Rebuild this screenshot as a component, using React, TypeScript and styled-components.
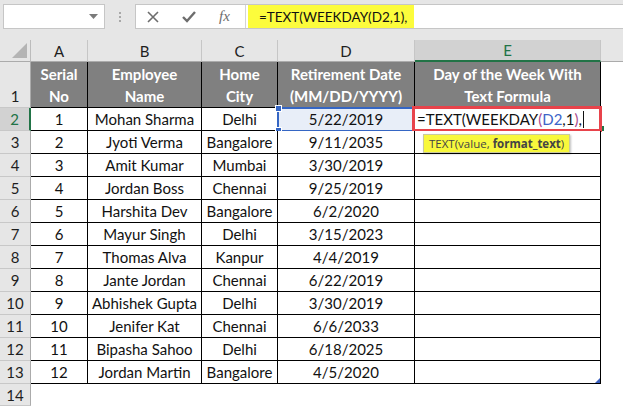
import React from "react";
import styled, { createGlobalStyle, css } from "styled-components";

const Global = createGlobalStyle`
  html, body { margin: 0; padding: 0; background: #ffffff; overflow: hidden; }
  body { font-family: Lato, "Open Sans", sans-serif; width: 623px; height: 406px; }
`;

const Page = styled.div`
  width: 623px;
  height: 406px;
  display: flex;
  flex-direction: column;
  overflow: hidden;
`;

const Toolbar = styled.div`
  height: 40px;
  flex: none;
  background: #e6e6e6;
  display: flex;
  align-items: flex-start;
  padding: 4px 0 0 3px;
  box-sizing: border-box;
`;

const NameBox = styled.div`
  width: 102px;
  height: 25px;
  box-sizing: border-box;
  background: #fff;
  border: 1px solid #c6c6c6;
  display: flex;
  justify-content: flex-end;
  align-items: center;
  padding-right: 6px;
`;

const Dots = styled.div`
  width: 30px;
  height: 25px;
  display: flex;
  flex-direction: column;
  align-items: center;
  justify-content: center;
  gap: 2px;
  span {
    width: 2px;
    height: 2px;
    background: #a8a8a8;
  }
`;

const FormulaBar = styled.div`
  flex: 1;
  height: 25px;
  box-sizing: border-box;
  background: #fff;
  border: 1px solid #c6c6c6;
  border-right: none;
  display: flex;
  align-items: stretch;
`;

const Buttons = styled.div`
  width: 110px;
  flex: none;
  display: flex;
  align-items: center;
  justify-content: flex-start;
  gap: 23px;
  padding: 0 0 0 11px;
  box-sizing: border-box;
  border-right: 1px solid #d4d4d4;
`;

const FxLabel = styled.span`
  font-family: "Liberation Serif", serif;
  font-style: italic;
  font-size: 15px;
  color: #6d6d6d;
`;

const FormulaInput = styled.div`
  display: flex;
  align-items: stretch;
  padding: 0 0 0 2px;
`;

const Highlight = styled.div`
  background: #fcfc3c;
  width: 166px;
  display: flex;
  align-items: center;
  padding-left: 11px;
  box-sizing: border-box;
  font-family: Lato, sans-serif;
  font-size: 13.5px;
  color: #111;
`;

const Sheet = styled.div`
  display: grid;
  grid-template-columns: 31px 57px 114px 76px 137px 186px 1fr;
  grid-template-rows: 22px 46px repeat(12, 23px) 22px;
  flex: 1;
`;

const headerBg = "#e6e6e6";

const Corner = styled.div`
  background: ${headerBg};
  border-right: 1px solid #bcbcbc;
  border-bottom: 1px solid #ababab;
  position: relative;
  &::after {
    content: "";
    position: absolute;
    right: 3px;
    bottom: 3px;
    width: 0;
    height: 0;
    border-left: 15px solid transparent;
    border-bottom: 15px solid #b4b4b4;
  }
`;

const ColHeader = styled.div<{ $active?: boolean; $last?: boolean }>`
  background: ${headerBg};
  border-right: ${(p) => (p.$last ? "none" : "1px solid #c6c6c6")};
  border-bottom: 1px solid #ababab;
  display: flex;
  align-items: center;
  justify-content: center;
  font-size: 15px;
  color: #1e1e1e;
  ${(p) =>
    p.$active &&
    css`
      background: #d2d2d2;
      color: #217346;
      border-bottom: 2px solid #217346;
    `}
`;

const RowHeader = styled.div<{ $active?: boolean; $tall?: boolean }>`
  background: ${headerBg};
  border-right: 1px solid #ababab;
  border-bottom: 1px solid #c8c8c8;
  display: flex;
  justify-content: center;
  align-items: ${(p) => (p.$tall ? "flex-end" : "center")};
  padding-bottom: ${(p) => (p.$tall ? "2px" : "0")};
  font-size: 15px;
  color: #1e1e1e;
  box-sizing: border-box;
  ${(p) =>
    p.$active &&
    css`
      background: #d2d2d2;
      color: #217346;
      border-right: 2px solid #217346;
    `}
`;

const HeadCell = styled.div`
  background: #808080;
  border-right: 1px solid #000;
  border-bottom: 1px solid #000;
  color: #fff;
  font-weight: 700;
  font-size: 15px;
  line-height: 22px;
  display: flex;
  align-items: flex-end;
  justify-content: center;
  text-align: center;
  white-space: nowrap;
`;

const Cell = styled.div<{ $selected?: boolean }>`
  border-right: 1px solid #000;
  border-bottom: 1px solid #000;
  display: flex;
  align-items: center;
  justify-content: center;
  font-size: 15px;
  color: #111;
  white-space: nowrap;
  position: relative;
  background: ${(p) => (p.$selected ? "#e8eef8" : "#fff")};
`;

const Blank = styled.div`
  background: #fff;
`;

const Selection = styled.div`
  position: absolute;
  left: -1px;
  top: -1px;
  right: -1px;
  bottom: -2px;
  border: 2px solid #3566c4;
  pointer-events: none;
`;

const Handle = styled.span<{ $pos: "top" | "bottom" }>`
  position: absolute;
  left: -4px;
  ${(p) => (p.$pos === "top" ? "top: -4px;" : "bottom: -4px;")}
  width: 5px;
  height: 5px;
  background: #3566c4;
  border: 1px solid #fff;
`;

const EditCell = styled.div`
  border-right: 1px solid #000;
  border-bottom: 1px solid #000;
  position: relative;
  display: flex;
  align-items: center;
  font-size: 15px;
  color: #111;
  white-space: nowrap;
  padding-left: 2px;
`;

const EditFrame = styled.div`
  position: absolute;
  left: -3px;
  top: -2px;
  right: -2px;
  bottom: -2px;
  border: 3px solid #e8434b;
  pointer-events: none;
`;

const Caret = styled.span`
  display: inline-block;
  width: 1px;
  height: 17px;
  background: #111;
  margin-left: 1px;
  vertical-align: middle;
`;

const Ref = styled.span`
  color: #3d64c8;
`;

const Paren = styled.span`
  color: #a8488c;
`;

const Tip = styled.div`
  position: absolute;
  left: 8px;
  top: 26px;
  height: 17px;
  padding: 0 5px;
  background: #f8f83c;
  border: 1px solid #c9c9a0;
  box-shadow: 1px 1px 2px rgba(0, 0, 0, 0.25);
  font-family: "Open Sans", sans-serif;
  font-size: 11.5px;
  color: #444;
  display: flex;
  align-items: center;
  z-index: 2;
  b {
    font-weight: 700;
    margin-left: 3px;
  }
`;

const FillMark = styled.span`
  position: absolute;
  right: -4px;
  bottom: -1px;
  width: 2px;
  height: 5px;
  background: #217346;
`;

const Corner2 = styled.span`
  position: absolute;
  right: 0;
  bottom: 0;
  width: 0;
  height: 0;
  border-left: 5px solid transparent;
  border-bottom: 5px solid #3a5fbf;
`;

const headers = [
  ["Serial", "No"],
  ["Employee", "Name"],
  ["Home", "City"],
  ["Retirement Date", "(MM/DD/YYYY)"],
  ["Day of the Week With", "Text Formula"],
];

const rows: [number, string, string, string][] = [
  [1, "Mohan Sharma", "Delhi", "5/22/2019"],
  [2, "Jyoti Verma", "Bangalore", "9/11/2035"],
  [3, "Amit Kumar", "Mumbai", "3/30/2019"],
  [4, "Jordan Boss", "Chennai", "9/25/2019"],
  [5, "Harshita Dev", "Bangalore", "6/2/2020"],
  [6, "Mayur Singh", "Delhi", "3/15/2023"],
  [7, "Thomas Alva", "Kanpur", "4/4/2019"],
  [8, "Jante Jordan", "Chennai", "6/22/2019"],
  [9, "Abhishek Gupta", "Delhi", "3/30/2019"],
  [10, "Jenifer Kat", "Chennai", "6/6/2033"],
  [11, "Bipasha Sahoo", "Delhi", "6/18/2025"],
  [12, "Jordan Martin", "Bangalore", "4/5/2020"],
];

export default function App() {
  return (
    <Page>
      <Global />
      <Toolbar>
        <NameBox>
          <svg width="9" height="5" viewBox="0 0 9 5">
            <path d="M0 0 H9 L4.5 5 Z" fill="#7a7a7a" />
          </svg>
        </NameBox>
        <Dots>
          <span />
          <span />
          <span />
        </Dots>
        <FormulaBar>
          <Buttons>
            <svg width="12" height="12" viewBox="0 0 12 12">
              <path d="M1 1 L11 11 M11 1 L1 11" stroke="#6d6d6d" strokeWidth="1.6" />
            </svg>
            <svg width="14" height="12" viewBox="0 0 14 12">
              <path d="M1 6 L5 10 L13 1" stroke="#6d6d6d" strokeWidth="2.4" fill="none" />
            </svg>
            <FxLabel>fx</FxLabel>
          </Buttons>
          <FormulaInput>
            <Highlight>=TEXT(WEEKDAY(D2,1),</Highlight>
          </FormulaInput>
        </FormulaBar>
      </Toolbar>
      <Sheet>
        <Corner />
        {["A", "B", "C", "D", "E"].map((c) => (
          <ColHeader key={c} $active={c === "E"}>
            {c}
          </ColHeader>
        ))}
        <ColHeader $last />

        <RowHeader $tall>1</RowHeader>
        {headers.map((h) => (
          <HeadCell key={h[0]}>
            {h[0]}
            <br />
            {h[1]}
          </HeadCell>
        ))}
        <Blank />

        {rows.map((r, i) => (
          <React.Fragment key={r[0]}>
            <RowHeader $active={i === 0}>{i + 2}</RowHeader>
            <Cell>{r[0]}</Cell>
            <Cell>{r[1]}</Cell>
            <Cell>{r[2]}</Cell>
            {i === 0 ? (
              <Cell $selected>
                {r[3]}
                <Selection>
                  <Handle $pos="top" />
                  <Handle $pos="bottom" />
                </Selection>
              </Cell>
            ) : (
              <Cell>{r[3]}</Cell>
            )}
            {i === 0 ? (
              <EditCell>
                =TEXT(WEEKDAY<Paren>(</Paren>
                <Ref>D2</Ref>,1<Paren>)</Paren>,<Caret />
                <EditFrame />
                <FillMark />
                <Tip>
                  TEXT(value,<b>format_text</b>)
                </Tip>
              </EditCell>
            ) : (
              <Cell>{i === rows.length - 1 && <Corner2 />}</Cell>
            )}
            <Blank />
          </React.Fragment>
        ))}

        <RowHeader>14</RowHeader>
        <Blank />
        <Blank />
        <Blank />
        <Blank />
        <Blank />
        <Blank />
      </Sheet>
    </Page>
  );
}
